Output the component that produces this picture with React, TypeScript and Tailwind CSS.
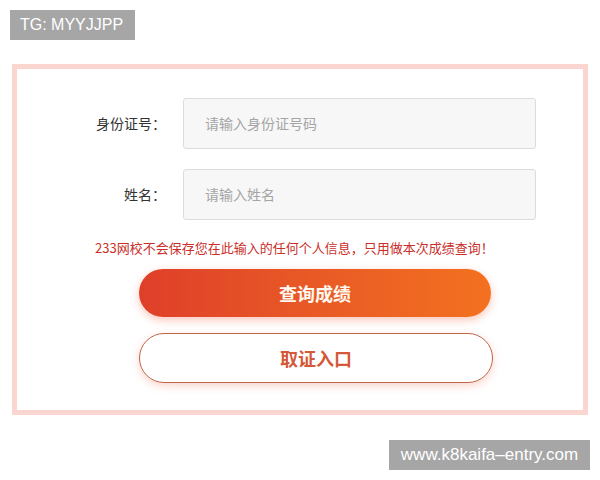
import React from "react";

const cjk = { fontFamily: '"Noto Sans CJK SC", "Noto Sans", sans-serif' };
const latin = { fontFamily: '"Liberation Sans", Arial, sans-serif' };

const Field: React.FC<{ label: string; placeholder: string }> = ({ label, placeholder }) => (
  <div className="flex flex-row items-center">
    <div className="w-[149px] text-right text-[14px] text-[#333]">{label}</div>
    <div className="ml-[17px] flex h-[51px] w-[353px] items-center rounded-[3px] border border-[#dcdcdc] bg-[#f7f7f7] pl-[21px] text-[14px] text-[#a5a5a5]">
      {placeholder}
    </div>
  </div>
);

export default function App() {
  return (
    <div className="h-[480px] w-[600px] overflow-hidden bg-white" style={cjk}>
      <div className="pl-[10px] pt-[10px]">
        <div
          className="flex h-[30px] w-[125px] items-center bg-[#a6a6a6] pl-[10px] text-[16px] text-white"
          style={latin}
        >
          TG: MYYJJPP
        </div>
      </div>

      <div className="ml-[12px] mt-[24px] h-[351px] w-[576px] border-[5px] border-[#fbd5cf] bg-white">
        <div className="flex flex-col pt-[29px]">
          <Field label="身份证号：" placeholder="请输入身份证号码" />
          <div className="mt-[20px]">
            <Field label="姓名：" placeholder="请输入姓名" />
          </div>

          <p className="mt-[19px] pl-[78px] text-[13px] leading-[18px] text-[#c92f2b]">
            233网校不会保存您在此输入的任何个人信息，只用做本次成绩查询！
          </p>

          <div className="ml-[122px] mt-[12px] flex flex-col gap-[16px]">
            <button className="flex h-[48px] w-[352px] items-center justify-center rounded-full bg-gradient-to-r from-[#de3f29] to-[#f3711f] text-[18px] font-bold text-[#fff8f0] shadow-[0_3px_8px_rgba(240,90,50,0.35)]">
              查询成绩
            </button>
            <button className="flex h-[50px] w-[354px] items-center justify-center rounded-full border-[1.5px] border-[#bf6549] bg-white text-[18px] font-bold text-[#d4583a] shadow-[0_3px_8px_rgba(240,120,90,0.3)]">
              取证入口
            </button>
          </div>
        </div>
      </div>

      <div className="mt-[25px] flex justify-end pr-[10px]">
        <div
          className="flex h-[30px] w-[201px] items-center justify-center bg-[#a6a6a6] text-[17px] text-white"
          style={latin}
        >
          www.k8kaifa–entry.com
        </div>
      </div>
    </div>
  );
}
